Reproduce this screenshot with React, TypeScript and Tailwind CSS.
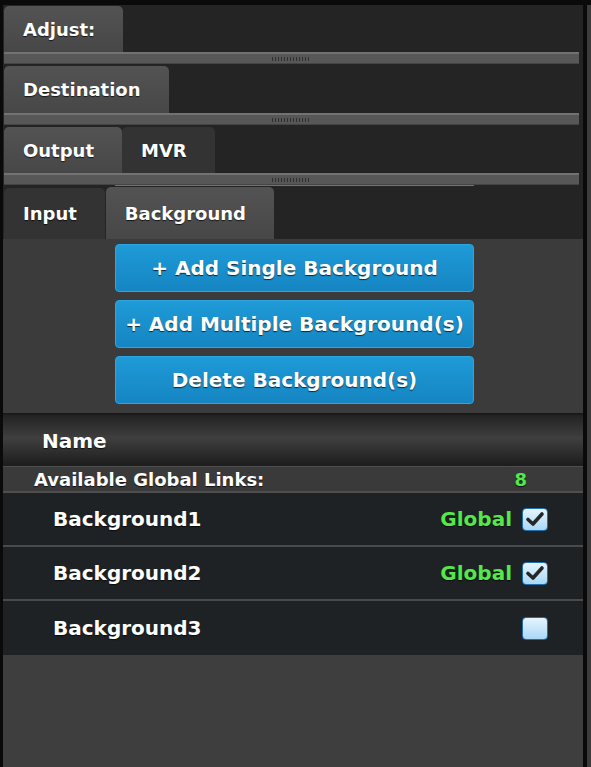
import React from "react";

const shadow = "[text-shadow:0_1px_1px_rgba(0,0,0,0.7)]";

function Splitter() {
  return (
    <div className="ml-px mr-[4px] h-[12px] border-t-2 border-[#727272] bg-[#575757] border-b border-b-[#444] flex items-center justify-center">
      <div className="w-[39px] h-[4px] bg-[repeating-linear-gradient(90deg,#2f2f2f_0_1px,transparent_1px_3px)]" />
    </div>
  );
}

function Tab({ label, active, h = "h-[46px]" }: { label: string; active?: boolean; h?: string }) {
  return (
    <div
      className={`${h} pl-[19px] pr-[28px] flex items-center rounded-t-[5px] text-[18px] font-bold text-white ${shadow} ${
        active ? "bg-[linear-gradient(#535353,#474747)]" : "bg-[#333333]"
      }`}
    >
      {label}
    </div>
  );
}

function BlueButton({ label }: { label: string }) {
  return (
    <button className={`w-[359px] h-[48px] rounded-[4px] border border-[#2ea6e2] bg-[linear-gradient(#1e9bd8,#1585c2)] text-white text-[20px] font-bold ${shadow}`}>
      {label}
    </button>
  );
}

function Check({ checked }: { checked: boolean }) {
  return (
    <div className="w-[26px] h-[23px] rounded-[4px] border border-[#1f6fae] bg-[linear-gradient(#e6f5fe,#a9d7f6)] flex items-center justify-center">
      {checked && (
        <svg width="20" height="16" viewBox="0 0 20 16">
          <path d="M3 8.5 L8 13 L17 3" fill="none" stroke="#262626" strokeWidth="3.6" strokeLinecap="round" strokeLinejoin="round" />
        </svg>
      )}
    </div>
  );
}

const rows = [
  { name: "Background1", global: true },
  { name: "Background2", global: true },
  { name: "Background3", global: false },
];

export default function App() {
  return (
    <div className="w-[591px] h-[767px] flex bg-[#0a0a0a] font-['DejaVu_Sans',sans-serif] overflow-hidden">
      <div className="w-[580px] shrink-0 ml-[3px] mt-[5px] flex flex-col bg-[#242424]">
        {/* stacked panels */}
        <div className="pt-px flex pl-px">
          <Tab label="Adjust:" active />
        </div>
        <Splitter />
        <div className="pt-[2px] flex pl-px">
          <Tab label="Destination" active h="h-[47px]" />
        </div>
        <Splitter />
        <div className="pt-[2px] flex pl-px">
          <Tab label="Output" active />
          <Tab label="MVR" />
        </div>
        <Splitter />
        <div className="ml-[112px] w-[359px] h-px bg-[#1a8fc9]" />
        <div className="flex items-end pl-px gap-px h-[53px]">
          <Tab label="Input" h="h-[51px]" />
          <Tab label="Background" active h="h-[52px]" />
        </div>

        {/* button area */}
        <div className="bg-[#3b3b3b] pt-[5px] pb-[9px] pl-[112px] flex flex-col gap-[8px]">
          <BlueButton label="+ Add Single Background" />
          <BlueButton label="+ Add Multiple Background(s)" />
          <BlueButton label="Delete Background(s)" />
        </div>
        <div className="h-[2px] bg-[#1a1a1a]" />

        {/* list */}
        <div className={`h-[51px] flex items-center pl-[39px] text-white text-[20px] font-bold ${shadow} bg-[linear-gradient(#222222,#3f3f3f_45%,#1c1c1c)]`}>
          Name
        </div>
        <div className={`h-[27px] flex items-center justify-between pl-[31px] pr-[56px] bg-[#3a3a3a] border-t border-[#4e4e4e] border-b-2 border-b-[#4f4f4f] text-[18px] font-bold ${shadow}`}>
          <span className="text-white">Available Global Links:</span>
          <span className="text-[#55e84a]">8</span>
        </div>
        {rows.map((r, i) => (
          <div
            key={r.name}
            className={`h-[54px] flex items-center justify-between pl-[50px] pr-[35px] bg-[#1f2224] ${
              i < rows.length - 1 ? "border-b-2 border-[#4a4a4a]" : ""
            }`}
          >
            <span className={`text-white text-[20px] font-bold ${shadow}`}>{r.name}</span>
            <div className="flex items-center gap-[10px]">
              {r.global && <span className={`text-[#55e84a] text-[20px] font-bold ${shadow}`}>Global</span>}
              <Check checked={r.global} />
            </div>
          </div>
        ))}
        <div className="flex-1 bg-[#3e3e3e]" />
      </div>
      <div className="w-[4px] shrink-0" />
      <div className="flex-1 bg-[#3c3c3c] mt-[5px]" />
    </div>
  );
}
